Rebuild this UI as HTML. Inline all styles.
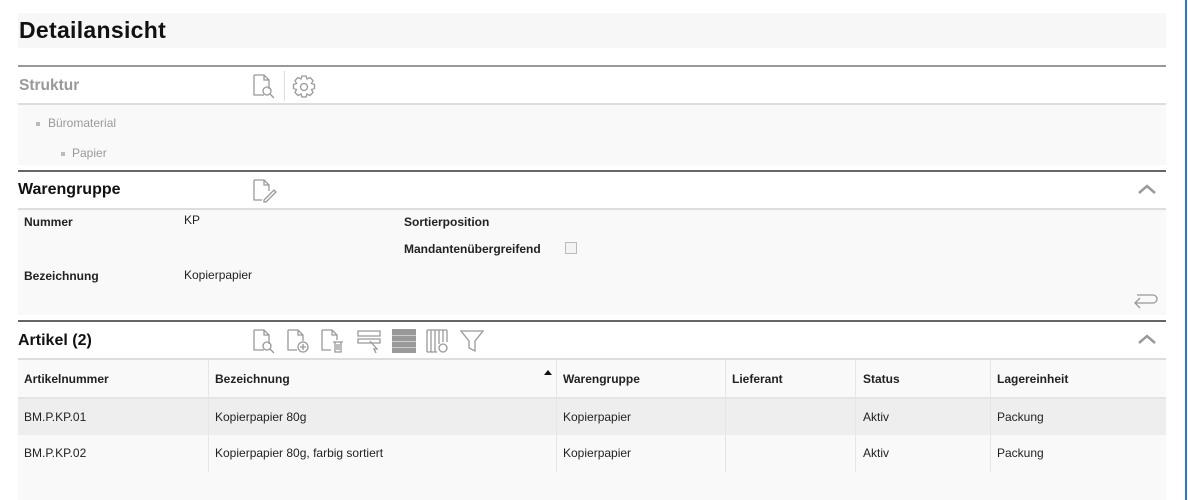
<!DOCTYPE html>
<html><head><meta charset="utf-8"><style>
*{margin:0;padding:0;box-sizing:border-box}
body{width:1188px;height:500px;background:#fff;font-family:"Liberation Sans",Arial,sans-serif;position:relative;overflow:hidden;font-size:12px;color:#222}
.a{position:absolute}
.b{font-weight:bold}
svg{position:absolute;fill:none;stroke:#999;stroke-width:1.3}
</style></head><body>
<div class="a" style="left:1185px;top:0;width:2px;height:500px;background:#2a7ac8"></div>
<div class="a" style="left:18px;top:13px;width:1148px;height:35px;background:#f7f7f7"></div>
<div class="a b" style="left:19px;top:17px;font-size:23px;color:#111;letter-spacing:0.3px">Detailansicht</div>

<div class="a" style="left:18px;top:65px;width:1148px;height:2px;background:#999"></div>
<div class="a b" style="left:19px;top:77px;font-size:15.5px;color:#999">Struktur</div>
<svg style="left:252px;top:73px" width="26" height="26"><path d="M2 2h10l5 5v9M2 2v20h10M12 2v5h5"/><circle cx="15" cy="18" r="4"/><path d="M18 21l4 4"/></svg>
<div class="a" style="left:284px;top:71px;width:1px;height:30px;background:#ddd"></div>
<svg style="left:291px;top:74px" width="26" height="26"><circle cx="13" cy="13" r="3.5"/><path d="M11 2h4l1 3 3-1.5 3 3L20.5 9.5l3 1v4l-3 1 1.5 3-3 3-3-1.5-1 3h-4l-1-3-3 1.5-3-3L5.5 15.5l-3-1v-4l3-1L4 6.5l3-3L10 5z"/></svg>
<div class="a" style="left:18px;top:103px;width:1148px;height:2px;background:#ddd"></div>
<div class="a" style="left:18px;top:105px;width:1148px;height:60px;background:#f9f9f9"></div>
<div class="a" style="left:36px;top:122px;width:4px;height:4px;background:#bbb"></div>
<div class="a" style="left:48px;top:116px;color:#999">Büromaterial</div>
<div class="a" style="left:61px;top:152px;width:4px;height:4px;background:#bbb"></div>
<div class="a" style="left:72px;top:146px;color:#999">Papier</div>

<div class="a" style="left:18px;top:170px;width:1148px;height:2px;background:#666"></div>
<div class="a b" style="left:18px;top:181px;font-size:16px;color:#111">Warengruppe</div>
<svg style="left:252px;top:178px" width="26" height="26"><path d="M2 2h10l5 5v6M2 2v20h8M12 2v5h5M12 22l10-10 2 2-10 10h-2z"/></svg>
<svg style="left:1136px;top:182px" width="22" height="14"><path d="M3 11l8-7 8 7" stroke-width="2.5"/></svg>
<div class="a" style="left:18px;top:208px;width:1148px;height:2px;background:#ddd"></div>
<div class="a" style="left:18px;top:210px;width:1148px;height:105px;background:#f9f9f9"></div>
<div class="a b" style="left:24px;top:215px">Nummer</div>
<div class="a" style="left:184px;top:213px">KP</div>
<div class="a b" style="left:404px;top:215px">Sortierposition</div>
<div class="a b" style="left:404px;top:242px">Mandantenübergreifend</div>
<div class="a" style="left:565px;top:242px;width:12px;height:12px;border:1px solid #bbb;background:#f3f3f3"></div>
<div class="a b" style="left:24px;top:269px">Bezeichnung</div>
<div class="a" style="left:184px;top:268px">Kopierpapier</div>
<svg style="left:1131px;top:292px" width="28" height="20"><path d="M6 3h16a4 4 0 0 1 0 8H4M9 6l-5 5 5 5"/></svg>

<div class="a" style="left:18px;top:320px;width:1148px;height:2px;background:#666"></div>
<div class="a b" style="left:18px;top:332px;font-size:16px;color:#111">Artikel (2)</div>
<svg style="left:252px;top:328px" width="26" height="26"><path d="M2 2h10l5 5v9M2 2v20h10M12 2v5h5"/><circle cx="15" cy="18" r="4"/><path d="M18 21l4 4"/></svg>
<svg style="left:286px;top:328px" width="26" height="26"><path d="M2 2h10l5 5v6M2 2v20h9M12 2v5h5"/><circle cx="17" cy="19" r="5"/><path d="M17 16v6M14 19h6"/></svg>
<svg style="left:320px;top:328px" width="26" height="26"><path d="M2 2h10l5 5v5M2 2v20h9M12 2v5h5M13 14h10M15 14v10h6V14M17 16v6M19 16v6"/></svg>
<svg style="left:356px;top:328px" width="28" height="26"><path d="M2 3h22v5H2zM2 11h22v4H2z"/><path d="M14 13l7 8-3 0 2 4" /></svg>
<div class="a" style="left:392px;top:329px;width:24px;height:24px;background:#999"></div>
<div class="a" style="left:392px;top:335px;width:24px;height:1px;background:#ccc"></div>
<div class="a" style="left:392px;top:341px;width:24px;height:1px;background:#ccc"></div>
<div class="a" style="left:392px;top:347px;width:24px;height:1px;background:#ccc"></div>
<svg style="left:425px;top:328px" width="28" height="26"><path d="M2 2v22M6 2v22M10 2v22M14 2v14M18 2v12M22 2v12M2 2h20M2 24h10"/><circle cx="18" cy="20" r="4"/></svg>
<svg style="left:459px;top:328px" width="28" height="26"><path d="M2 3h22l-8 10v10l-6-3v-7z"/></svg>
<svg style="left:1136px;top:332px" width="22" height="14"><path d="M3 11l8-7 8 7" stroke-width="2.5"/></svg>
<div class="a" style="left:18px;top:358px;width:1148px;height:2px;background:#ddd"></div>

<div class="a" style="left:18px;top:360px;width:1148px;height:140px;background:#f9f9f9"></div>
<div class="a" style="left:18px;top:397px;width:1148px;height:2px;background:#e4e4e4"></div>
<div class="a" style="left:18px;top:399px;width:1148px;height:36px;background:#eee"></div>
<div class="a" style="left:208px;top:360px;width:1px;height:112px;background:#e6e6e6"></div>
<div class="a" style="left:556px;top:360px;width:1px;height:112px;background:#e6e6e6"></div>
<div class="a" style="left:725px;top:360px;width:1px;height:112px;background:#e6e6e6"></div>
<div class="a" style="left:855px;top:360px;width:1px;height:112px;background:#e6e6e6"></div>
<div class="a" style="left:990px;top:360px;width:1px;height:112px;background:#e6e6e6"></div>
<div class="a" style="left:544px;top:370px;width:0;height:0;border-left:4px solid transparent;border-right:4px solid transparent;border-bottom:5px solid #111"></div>
<div class="a b" style="left:24px;top:372px">Artikelnummer</div>
<div class="a b" style="left:215px;top:372px">Bezeichnung</div>
<div class="a b" style="left:563px;top:372px">Warengruppe</div>
<div class="a b" style="left:732px;top:372px">Lieferant</div>
<div class="a b" style="left:863px;top:372px">Status</div>
<div class="a b" style="left:997px;top:372px">Lagereinheit</div>
<div class="a" style="left:24px;top:410px">BM.P.KP.01</div>
<div class="a" style="left:215px;top:410px">Kopierpapier 80g</div>
<div class="a" style="left:563px;top:410px">Kopierpapier</div>
<div class="a" style="left:863px;top:410px">Aktiv</div>
<div class="a" style="left:997px;top:410px">Packung</div>
<div class="a" style="left:24px;top:446px">BM.P.KP.02</div>
<div class="a" style="left:215px;top:446px">Kopierpapier 80g, farbig sortiert</div>
<div class="a" style="left:563px;top:446px">Kopierpapier</div>
<div class="a" style="left:863px;top:446px">Aktiv</div>
<div class="a" style="left:997px;top:446px">Packung</div>
</body></html>
